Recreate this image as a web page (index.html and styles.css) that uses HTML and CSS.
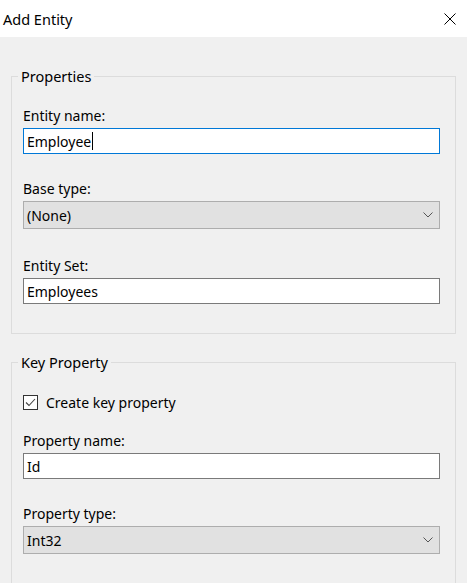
FILE: index.html
```html
<!DOCTYPE html>
<html>
<head>
<meta charset="utf-8">
<link rel="stylesheet" href="styles.css">
</head>
<body>
<div class="window">
  <div class="titlebar">
    <span class="title">Add Entity</span>
    <svg class="close" width="12" height="12" viewBox="0 0 12 12"><path d="M0.5 0.5 L11.5 11.5 M11.5 0.5 L0.5 11.5" stroke="#000" stroke-width="1" fill="none"/></svg>
  </div>
  <div class="content">
    <fieldset class="group group-props">
      <legend>Properties</legend>
      <div class="field-label first">Entity name:</div>
      <div class="textbox focused"><span>Employee</span><span class="caret"></span></div>
      <div class="field-label">Base type:</div>
      <div class="combo"><span>(None)</span><svg class="chev" width="10" height="6" viewBox="0 0 10 6"><path d="M0.5 0.5 L5 5 L9.5 0.5" stroke="#555" stroke-width="1" fill="none"/></svg></div>
      <div class="field-label set">Entity Set:</div>
      <div class="textbox"><span>Employees</span></div>
    </fieldset>
    <fieldset class="group group-key">
      <legend>Key Property</legend>
      <div class="check-row">
        <span class="checkbox"><svg width="13" height="13" viewBox="0 0 13 13"><path d="M2 6.5 L5 9.5 L11 3" stroke="#444" stroke-width="1.1" fill="none"/></svg></span>
        <span class="check-text">Create key property</span>
      </div>
      <div class="field-label after-check">Property name:</div>
      <div class="textbox"><span>Id</span></div>
      <div class="field-label">Property type:</div>
      <div class="combo"><span>Int32</span><svg class="chev" width="10" height="6" viewBox="0 0 10 6"><path d="M0.5 0.5 L5 5 L9.5 0.5" stroke="#555" stroke-width="1" fill="none"/></svg></div>
    </fieldset>
  </div>
</div>
</body>
</html>
```
FILE: styles.css
```css
html, body {
  margin: 0;
  padding: 0;
  background: #f0f0f0;
}
body {
  font-family: "Noto Sans", "Open Sans", sans-serif;
  font-size: 14px;
  color: #000;
}
.window {
  width: 467px;
  height: 583px;
  overflow: hidden;
  background: #f0f0f0;
}
.titlebar {
  height: 37px;
  background: #fff;
  display: flex;
  align-items: center;
  justify-content: space-between;
  padding: 0 11px 0 3px;
  box-sizing: border-box;
}
.title {
  font-size: 14.5px;
  line-height: 20px;
}
.close {
  display: block;
}
.content {
  padding: 29px 11px 0 11px;
}
.group {
  margin: 0;
  border: 1px solid #dcdcdc;
  padding: 20px 15px 29px 11px;
  min-width: 0;
}
.group legend {
  padding: 0 3px;
  margin-left: -5px;
  line-height: 20px;
  height: 20px;
  font-size: 14.5px;
}
.group-key {
  margin-top: 18px;
  padding-bottom: 40px;
}
.field-label {
  line-height: 20px;
  height: 20px;
  margin-top: 25px;
  margin-bottom: 2px;
}
.field-label.first {
  margin-top: 0;
}
.field-label.set {
  margin-top: 27px;
}
.field-label.after-check {
  margin-top: 19px;
}
.textbox {
  height: 26px;
  box-sizing: border-box;
  border: 1px solid #7a7a7a;
  background: #fff;
  padding: 0 3px;
  display: flex;
  align-items: center;
}
.textbox.focused {
  border-color: #0078d7;
}
.caret {
  display: inline-block;
  width: 1px;
  height: 18px;
  background: #000;
  margin-left: 1px;
}
.combo {
  height: 28px;
  box-sizing: border-box;
  border: 1px solid #adadad;
  background: #e1e1e1;
  padding: 0 6px 0 3px;
  display: flex;
  align-items: center;
  justify-content: space-between;
}
.chev {
  display: block;
}
.check-row {
  height: 20px;
  display: flex;
  align-items: center;
  margin-top: 0;
}
.checkbox {
  width: 15px;
  height: 15px;
  box-sizing: border-box;
  border: 1px solid #333;
  background: #fff;
  display: flex;
  align-items: center;
  justify-content: center;
  margin-right: 8px;
}
.checkbox svg {
  display: block;
}
```
